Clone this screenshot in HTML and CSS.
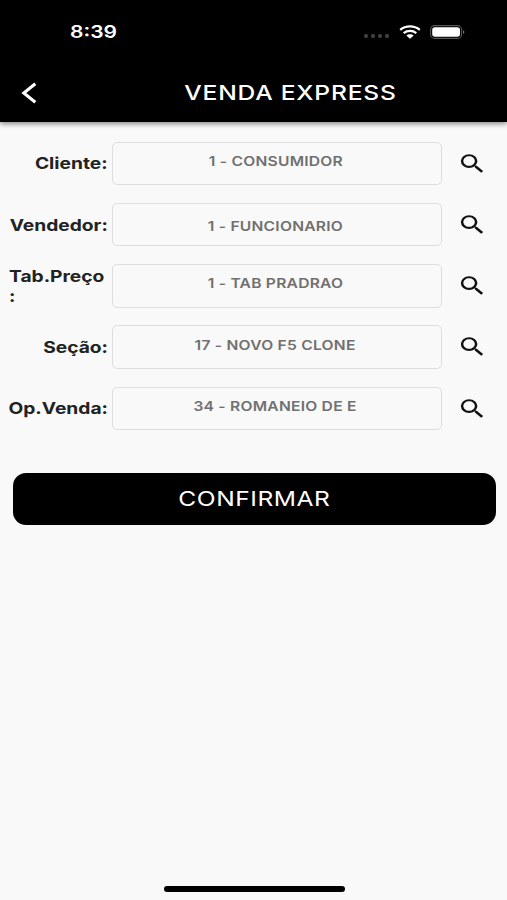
FILE: index.html
```html
<!DOCTYPE html>
<html lang="pt-BR">
<head>
    <meta charset="UTF-8">
    <title>Venda Express</title>
    <link rel="stylesheet" href="styles.css">
</head>
<body>
    <svg class="defs">
        <symbol id="search" viewBox="0 0 24 24" preserveAspectRatio="none">
            <path d="M15.5 14h-.79l-.28-.27A6.471 6.471 0 0 0 16 9.5 6.5 6.5 0 1 0 9.5 16c1.61 0 3.09-.59 4.23-1.57l.27.28v.79l5 4.99L20.49 19l-4.99-5zm-6 0C7.01 14 5 11.99 5 9.5S7.01 5 9.5 5 14 7.01 14 9.5 11.99 14 9.5 14z"/>
        </symbol>
    </svg>

    <header class="header">
        <div class="status">
            <span class="time">8:39</span>
            <div class="signal"><i></i><i></i><i></i><i></i></div>
            <svg class="wifi" viewBox="0 0 22 14">
                <path d="M1.2 4.9C6.8.3 15.2.3 20.8 4.9M4.7 8.1c3.6-2.9 9-2.9 12.6 0" fill="none" stroke="#fff" stroke-width="2.3"/>
                <path d="M7.3 10.6c2.1-1.8 5.3-1.8 7.4 0L11 13.8z" fill="#fff"/>
            </svg>
            <svg class="battery" viewBox="0 0 36 14">
                <rect x=".6" y=".6" width="31" height="12.8" rx="4" fill="none" stroke="#555" stroke-width="1.1"/>
                <rect x="2.2" y="2.2" width="27.8" height="9.6" rx="2.8" fill="#fff"/>
                <path d="M33 5.2c1.8.5 1.8 3.1 0 3.6z" fill="#777"/>
            </svg>
        </div>
        <div class="navbar">
            <svg class="back" viewBox="0 0 16 22">
                <path d="M14.3 1.8L2.8 11l11.5 9.2" fill="none" stroke="#fff" stroke-width="3.1"/>
            </svg>
            <h1 class="title"><span>VENDA EXPRESS</span></h1>
        </div>
    </header>

    <main class="form">
        <div class="row">
            <label class="label"><span>Cliente:</span></label>
            <div class="field"><span>1 - CONSUMIDOR</span></div>
            <svg class="search"><use href="#search"/></svg>
        </div>
        <div class="row">
            <label class="label"><span>Vendedor:</span></label>
            <div class="field low"><span>1 - FUNCIONARIO</span></div>
            <svg class="search"><use href="#search"/></svg>
        </div>
        <div class="row">
            <label class="label wrap"><span>Tab.Preço<br>:</span></label>
            <div class="field"><span>1 - TAB PRADRAO</span></div>
            <svg class="search"><use href="#search"/></svg>
        </div>
        <div class="row">
            <label class="label"><span>Seção:</span></label>
            <div class="field"><span>17 - NOVO F5 CLONE</span></div>
            <svg class="search"><use href="#search"/></svg>
        </div>
        <div class="row">
            <label class="label"><span>Op.Venda:</span></label>
            <div class="field"><span>34 - ROMANEIO DE E</span></div>
            <svg class="search"><use href="#search"/></svg>
        </div>
        <button class="button"><span>CONFIRMAR</span></button>
    </main>

    <div class="home-bar"></div>
</body>
</html>
```

FILE: styles.css
```css
* {
    box-sizing: border-box;
}
body {
    margin: 0;
    height: 900px;
    display: flex;
    flex-direction: column;
    overflow: hidden;
    background: #f9f9f9;
    font-family: Inter, "Liberation Sans", sans-serif;
    color: #222;
}
.defs {
    display: none;
}
.header {
    height: 122px;
    background: #000;
    color: #fff;
    box-shadow: 0 2px 5px rgba(0, 0, 0, 0.45);
}
.status {
    height: 63px;
    padding: 0 41px 0 70px;
    display: flex;
    align-items: center;
}
.time {
    font-size: 17.5px;
    font-weight: 600;
    transform: scaleX(1.2);
    transform-origin: left;
    margin-right: auto;
}
.signal {
    display: flex;
    gap: 3px;
    margin: 9px 10px 0 0;
}
.signal i {
    width: 4px;
    height: 4px;
    border-radius: 50%;
    background: #444;
}
.wifi {
    width: 22px;
    height: 14px;
    margin-right: 9px;
}
.battery {
    width: 36px;
    height: 14px;
}
.navbar {
    height: 59px;
    padding-left: 21px;
    display: flex;
    align-items: center;
}
.back {
    width: 16px;
    height: 22px;
}
.title {
    flex: 1;
    margin: 0 0 0 37px;
    font-size: 20.5px;
    font-weight: 500;
    letter-spacing: 0.65px;
    text-align: center;
}
.title span {
    display: inline-block;
    transform: scaleX(1.2);
}
.form {
    flex: 1;
    padding: 19.5px 12px 0 9px;
}
.row {
    display: flex;
    align-items: center;
    height: 43.5px;
    margin-bottom: 17.8px;
}
.label {
    width: 99px;
    margin-right: 4px;
    font-size: 16px;
    font-weight: 700;
    line-height: 20px;
    text-align: right;
    white-space: nowrap;
}
.label span {
    display: inline-block;
    transform: scaleX(1.2);
    transform-origin: right;
}
.wrap {
    text-align: left;
}
.wrap span {
    transform-origin: left;
}
.field {
    width: 330px;
    height: 43.5px;
    padding: 0 3px 5px 0;
    display: flex;
    align-items: center;
    justify-content: center;
    border: 1px solid #dedede;
    border-radius: 5px;
    font-size: 13px;
    font-weight: 600;
    letter-spacing: 0.2px;
    color: #707070;
}
.field span {
    transform: scaleX(1.2);
}
.low {
    padding: 2px 3px 0 0;
}
.search {
    width: 30.6px;
    height: 25.4px;
    margin-left: 15px;
    fill: #111;
}
.button {
    display: block;
    width: 483.5px;
    height: 52.5px;
    margin: 42.5px 0 0 3.5px;
    border: none;
    border-radius: 13px;
    background: #000;
    color: #fff;
    font-family: inherit;
    font-size: 20.5px;
    letter-spacing: 0.45px;
}
.button span {
    display: inline-block;
    transform: scaleX(1.2);
}
.home-bar {
    width: 181px;
    height: 6px;
    margin: 0 auto 8px;
    border-radius: 3px;
    background: #000;
    position: relative;
    left: 1px;
}
```
